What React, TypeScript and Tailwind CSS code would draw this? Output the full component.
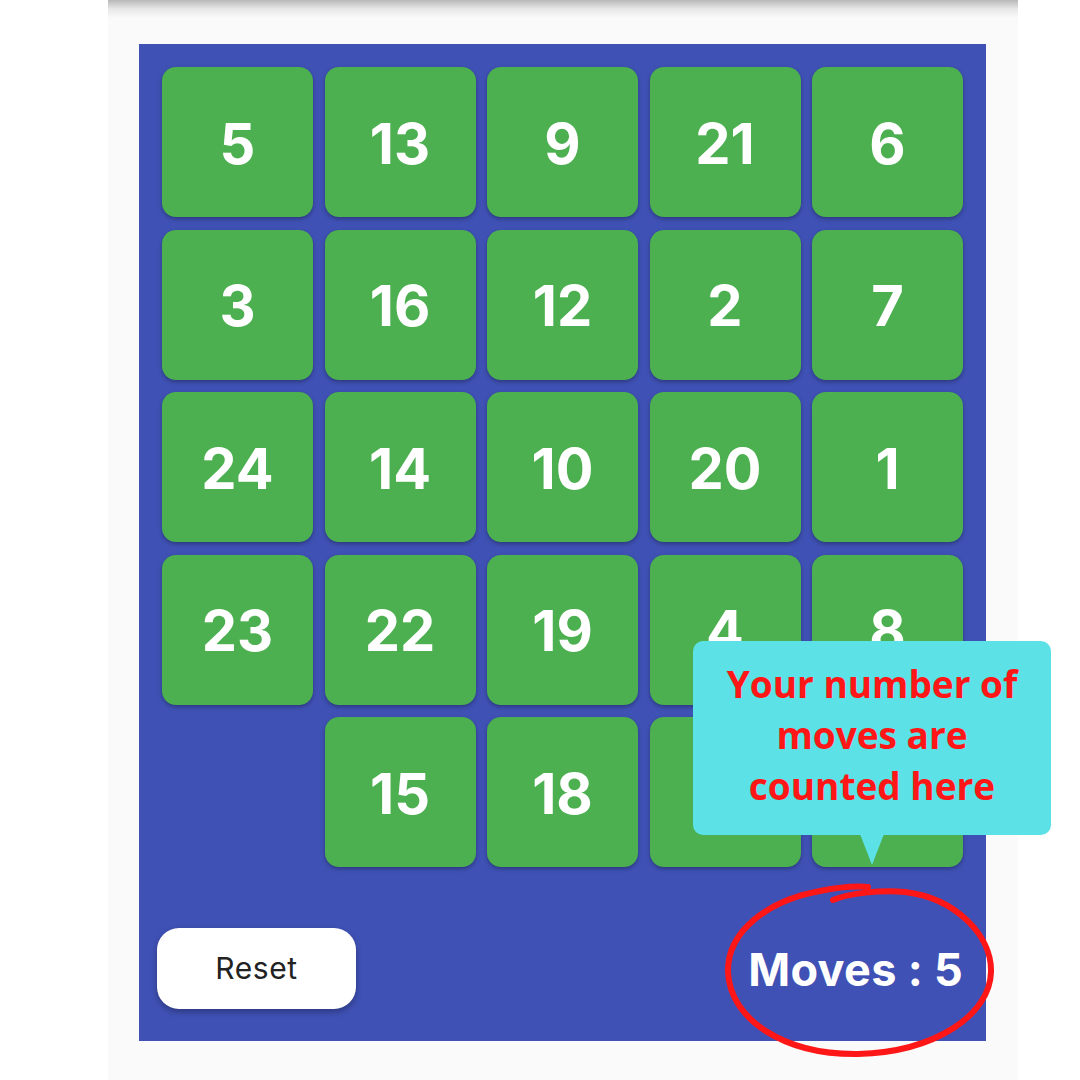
import React from "react";

const tiles: (number | null)[] = [
  5, 13, 9, 21, 6,
  3, 16, 12, 2, 7,
  24, 14, 10, 20, 1,
  23, 22, 19, 4, 8,
  null, 15, 18, 11, 17,
];

// tiles hidden under the tooltip show no label in the shot
const hidden = [11, 17];

export default function App() {
  return (
    <div className="relative w-[1080px] h-[1080px] bg-white overflow-hidden">
      {/* Phone column */}
      <div className="relative ml-[108px] w-[910px] h-full bg-[#fafafa]">
        {/* App bar shadow */}
        <div className="absolute top-0 left-0 right-0 h-[18px] bg-gradient-to-b from-[#b8b8b8] via-[#e8e8e8] to-[#fafafa]" />

        <div className="relative top-[44px] ml-[31px] w-[847px] h-[997px] bg-[#3f51b5] pt-[23px] pl-[23px] flex flex-col">
          <div className="grid grid-cols-[repeat(5,151px)] auto-rows-[150px] gap-x-[11.5px] gap-y-[12.5px]">
            {tiles.map((n, i) =>
              n === null ? (
                <div key={i} />
              ) : (
                <div
                  key={i}
                  className="rounded-[14px] bg-[#4caf50] shadow-[0_2px_4px_rgba(0,0,0,0.3)] flex items-center justify-center pt-[3px] text-white font-bold text-[56px] leading-none font-['Inter',sans-serif]"
                >
                  {hidden.includes(n) ? "" : n}
                </div>
              )
            )}
          </div>

          <div className="mt-[61px] flex items-center justify-between pr-[23px]">
            <button className="w-[199px] h-[81px] -ml-[5px] rounded-[22px] bg-white shadow-[0_3px_6px_rgba(0,0,0,0.3)] text-[#222] text-[30px] tracking-[0.6px] font-['Inter',sans-serif]">
              Reset
            </button>
            <span className="text-white font-bold text-[45px] tracking-[0.3px] leading-none mt-[2px] font-['Inter',sans-serif]">
              Moves : 5
            </span>
          </div>
        </div>
      </div>

      {/* Tooltip */}
      <div className="absolute left-[693px] top-[641px] w-[358px] h-[194px] rounded-[10px] bg-[#5ce1e6] pt-[17px] text-center text-[#ff1616] font-bold text-[37px] leading-[51px] font-['Open_Sans',sans-serif]">
        Your number of
        <br />
        moves are
        <br />
        counted here
      </div>
      <div className="absolute left-[860px] top-[834px] w-0 h-0 border-l-[12.5px] border-r-[12.5px] border-t-[31px] border-l-transparent border-r-transparent border-t-[#5ce1e6]" />

      {/* Hand-drawn circle */}
      <svg className="absolute left-0 top-0 pointer-events-none" width="1080" height="1080" viewBox="0 0 1080 1080">
        <path
          d="M833 900 C 850 893, 880 890, 905 892 C 955 898, 992 935, 991 972 C 990 1015, 935 1052, 858 1054 C 785 1055, 730 1020, 728 972 C 727 930, 770 900, 820 891 C 840 887, 858 886, 868 887"
          fill="none"
          stroke="#ff1616"
          strokeWidth="6"
          strokeLinecap="round"
        />
      </svg>
    </div>
  );
}
